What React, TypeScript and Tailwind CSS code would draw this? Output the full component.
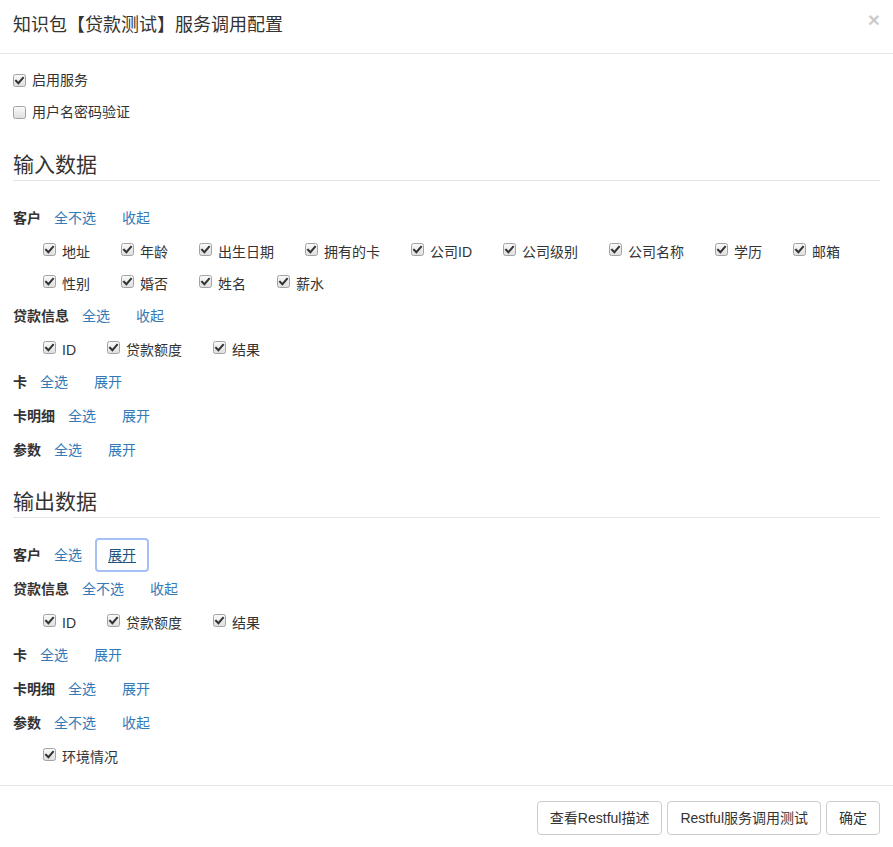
import React from "react";

type Group = {
  label: string;
  toggle: string;
  expand: string;
  items?: string[];
  focused?: boolean;
};

const inputGroups: Group[] = [
  {
    label: "客户",
    toggle: "全不选",
    expand: "收起",
    items: ["地址", "年龄", "出生日期", "拥有的卡", "公司ID", "公司级别", "公司名称", "学历", "邮箱", "性别", "婚否", "姓名", "薪水"],
  },
  { label: "贷款信息", toggle: "全选", expand: "收起", items: ["ID", "贷款额度", "结果"] },
  { label: "卡", toggle: "全选", expand: "展开" },
  { label: "卡明细", toggle: "全选", expand: "展开" },
  { label: "参数", toggle: "全选", expand: "展开" },
];

const outputGroups: Group[] = [
  { label: "客户", toggle: "全选", expand: "展开", focused: true },
  { label: "贷款信息", toggle: "全不选", expand: "收起", items: ["ID", "贷款额度", "结果"] },
  { label: "卡", toggle: "全选", expand: "展开" },
  { label: "卡明细", toggle: "全选", expand: "展开" },
  { label: "参数", toggle: "全不选", expand: "收起", items: ["环境情况"] },
];

function CheckBox({ checked = true }: { checked?: boolean }) {
  return (
    <svg width="13" height="13" viewBox="0 0 13 13" className="shrink-0">
      <defs>
        <linearGradient id="cbg" x1="0" y1="0" x2="0" y2="1">
          <stop offset="0" stopColor="#fbfbfb" />
          <stop offset="1" stopColor="#dedede" />
        </linearGradient>
      </defs>
      <rect x="0.5" y="0.5" width="12" height="12" rx="2" fill="url(#cbg)" stroke="#a3a3a3" />
      {checked && (
        <path d="M3 6.8 L5.4 9.2 L10 3.8" fill="none" stroke="#333" strokeWidth="2" strokeLinecap="square" />
      )}
    </svg>
  );
}

function LinkButton({ text, focused }: { text: string; focused?: boolean }) {
  return (
    <button
      className={
        focused
          ? "h-[34px] px-[11px] border-2 border-[#a6c0f4] rounded-[4px] text-[14px] leading-[20px] text-[#23527c] underline underline-offset-2"
          : "h-[34px] px-[12px] border border-transparent text-[14px] leading-[20px] text-[#337ab7]"
      }
    >
      {text}
    </button>
  );
}

function GroupBlock({ group }: { group: Group }) {
  return (
    <div>
      <div className="flex items-center h-[34px]">
        <span className="font-bold text-[14px] leading-[20px] text-[#333]">{group.label}</span>
        <LinkButton text={group.toggle} />
        <LinkButton text={group.expand} focused={group.focused} />
      </div>
      {group.items && (
        <div className="flex flex-wrap pl-[30px]">
          {group.items.map((item) => (
            <label key={item} className="flex items-start h-[32px] mr-[31px]">
              <span className="mt-[8px]">
                <CheckBox />
              </span>
              <span className="ml-[6px] mt-[7px] text-[14px] leading-[20px] text-[#333]">{item}</span>
            </label>
          ))}
        </div>
      )}
    </div>
  );
}

function Legend({ title, className = "" }: { title: string; className?: string }) {
  return (
    <div className={`h-[31px] border-b border-[#e5e5e5] mb-[20px] text-[21px] leading-[30px] text-[#333] ${className}`}>
      {title}
    </div>
  );
}

export default function App() {
  return (
    <div
      className="w-[893px] h-[847px] bg-white text-[#333] overflow-hidden"
      style={{ fontFamily: '"Liberation Sans", "Noto Sans CJK SC", sans-serif' }}
    >
      <div className="h-[54px] border-b border-[#e5e5e5] px-[13px] flex items-start justify-between">
        <h4 className="mt-[12px] text-[18px] leading-[26px] text-[#333]">知识包【贷款测试】服务调用配置</h4>
        <button className="mt-[7px] text-[21px] leading-[26px] font-bold text-black opacity-20">×</button>
      </div>

      <div className="px-[13px] pt-[16px] pb-[13px]">
        <label className="flex items-center h-[20px]">
          <CheckBox />
          <span className="ml-[6px] text-[14px] leading-[20px]">启用服务</span>
        </label>
        <label className="flex items-center h-[20px] mt-[12px]">
          <CheckBox checked={false} />
          <span className="ml-[6px] text-[14px] leading-[20px]">用户名密码验证</span>
        </label>

        <Legend title="输入数据" className="mt-[28px]" />
        {inputGroups.map((g) => (
          <GroupBlock key={"in-" + g.label} group={g} />
        ))}

        <Legend title="输出数据" className="mt-[20px]" />
        {outputGroups.map((g) => (
          <GroupBlock key={"out-" + g.label} group={g} />
        ))}
      </div>

      <div className="border-t border-[#e5e5e5] pt-[15px] px-[13px] flex justify-end gap-[5px]">
        <button className="h-[34px] px-[12px] border border-[#ccc] rounded-[4px] text-[14px] text-[#333]">查看Restful描述</button>
        <button className="h-[34px] px-[12px] border border-[#ccc] rounded-[4px] text-[14px] text-[#333]">Restful服务调用测试</button>
        <button className="h-[34px] px-[12px] border border-[#ccc] rounded-[4px] text-[14px] text-[#333]">确定</button>
      </div>
    </div>
  );
}
